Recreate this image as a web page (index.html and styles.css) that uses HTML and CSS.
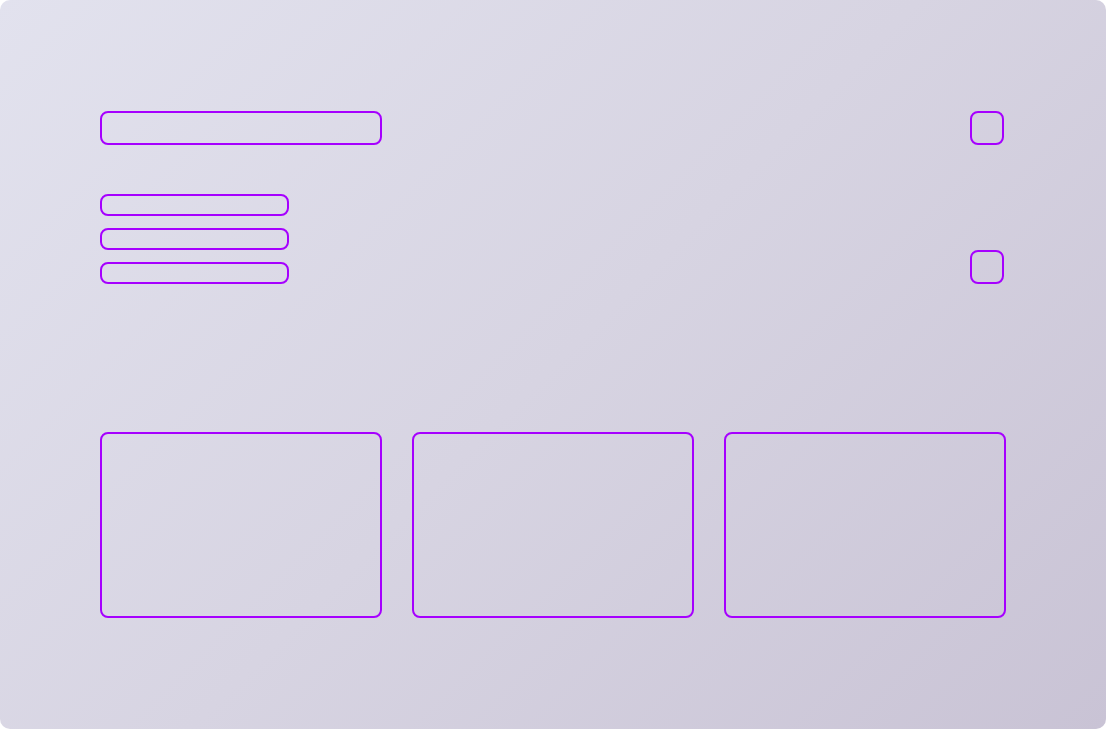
FILE: index.html
```html
<!doctype html>
<html lang="en">
<head>
    <meta charset="UTF-8">
    <title>Wireframe</title>
    <link rel="stylesheet" href="styles.css">
</head>
<body>
<div id="page">
    <div class="top">
        <div class="search"></div>
        <div class="square"></div>
    </div>
    <div class="middle">
        <ul class="menu">
            <li></li>
            <li></li>
            <li></li>
        </ul>
        <div class="square"></div>
    </div>
    <div class="cards">
        <div class="card"></div>
        <div class="card"></div>
        <div class="card"></div>
    </div>
</div>
</body>
</html>
```

FILE: styles.css
```css
*{
    padding: 0;
    margin: 0;
    box-sizing: border-box;
}
html, body{
    background: #ffffff;
}
li{
    list-style: none;
}
#page{
    width: 1106px;
    height: 729px;
    border-radius: 10px;
    background: linear-gradient(135deg, #e2e2ee 0%, #d7d4e2 50%, #c9c3d5 100%);
    padding: 111px 100px 0 100px;
}
.top, .middle{
    display: flex;
    justify-content: space-between;
    padding-right: 2px;
}
.middle{
    align-items: flex-end;
    margin-top: 49px;
}
.search{
    width: 282px;
    height: 34px;
    border: 2px solid #a600ff;
    border-radius: 8px;
}
.square{
    width: 34px;
    height: 34px;
    border: 2px solid #a600ff;
    border-radius: 8px;
}
.menu{
    display: flex;
    flex-direction: column;
    gap: 12px;
}
.menu li{
    width: 189px;
    height: 22px;
    border: 2px solid #a600ff;
    border-radius: 8px;
}
.cards{
    display: flex;
    gap: 30px;
    margin-top: 148px;
}
.card{
    width: 282px;
    height: 186px;
    border: 2px solid #a600ff;
    border-radius: 8px;
}
```
